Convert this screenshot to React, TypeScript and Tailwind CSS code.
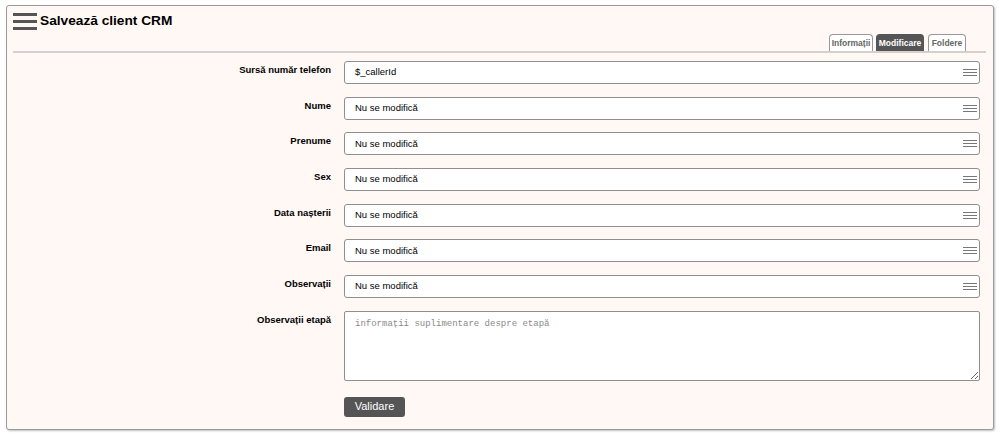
import React from "react";

const rows = [
  { label: "Sursă număr telefon", value: "$_callerId" },
  { label: "Nume", value: "Nu se modifică" },
  { label: "Prenume", value: "Nu se modifică" },
  { label: "Sex", value: "Nu se modifică" },
  { label: "Data nașterii", value: "Nu se modifică" },
  { label: "Email", value: "Nu se modifică" },
  { label: "Observații", value: "Nu se modifică" },
];

const MenuLines = () => (
  <div className="flex flex-col gap-[2px] w-[14px]">
    <div className="h-[1px] bg-[#777]" />
    <div className="h-[1px] bg-[#777]" />
    <div className="h-[1px] bg-[#777]" />
  </div>
);

const App = () => {
  return (
    <div
      className="w-[1000px] h-[435px] bg-white pt-[5px] px-[6px]"
      style={{ fontFamily: '"Liberation Sans", Arial, sans-serif' }}
    >
      <div className="h-[425px] border border-[#9a9a9a] rounded-[3px] bg-[#fff8f5] shadow-[1px_1px_2px_rgba(0,0,0,0.25)] px-[6px] pt-[6px]">
        {/* header */}
        <div className="flex items-center h-[18px]">
          <div className="flex flex-col gap-[4px] w-[24px] mr-[3px]">
            <div className="h-[3px] bg-[#555]" />
            <div className="h-[3px] bg-[#555]" />
            <div className="h-[3px] bg-[#555]" />
          </div>
          <h1 className="text-[13.7px] font-bold text-black">Salvează client CRM</h1>
        </div>

        {/* tabs */}
        <div className="flex justify-end items-end h-[23px] border-b-2 border-[#d4d0ce] mr-[1px] pr-[20px] gap-[3px]">
          <div className="w-[44px] h-[17px] border border-b-0 border-[#999] rounded-t-[4px] bg-white text-[8.5px] font-bold text-[#666] flex items-center justify-center">
            Informații
          </div>
          <div className="w-[48px] h-[17px] border border-b-0 border-[#555] rounded-t-[4px] bg-[#555] text-[8.5px] font-bold text-white flex items-center justify-center">
            Modificare
          </div>
          <div className="w-[38px] h-[17px] border border-b-0 border-[#999] rounded-t-[4px] bg-white text-[8.5px] font-bold text-[#666] flex items-center justify-center ml-[1px]">
            Foldere
          </div>
        </div>

        {/* form */}
        <div className="mt-[8px] flex flex-col gap-[12.67px]">
          {rows.map((r) => (
            <div key={r.label} className="flex">
              <div className="w-[318px] text-right text-[9.5px] leading-[12px] font-bold text-black pt-[3px]">
                {r.label}
              </div>
              <div className="ml-[13px] w-[636px] h-[23px] border border-[#8f8f8f] rounded-[3px] bg-white flex items-center justify-between pl-[10px] pr-[2px] text-[9.5px] text-black">
                <span>{r.value}</span>
                <MenuLines />
              </div>
            </div>
          ))}
          <div className="flex">
            <div className="w-[318px] text-right text-[9.5px] leading-[12px] font-bold text-black pt-[3px]">
              Observații etapă
            </div>
            <textarea
              className="ml-[13px] w-[636px] h-[70px] border border-[#8f8f8f] rounded-[2px] bg-white px-[10px] py-[6px] text-[9px] text-black placeholder:text-[#8a8a8a] outline-none"
              style={{ fontFamily: '"Liberation Mono", "Courier New", monospace' }}
              placeholder="informații suplimentare despre etapă"
            />
          </div>
        </div>

        <div className="flex mt-[16px]">
          <div className="w-[331px]" />
          <button className="w-[61px] h-[20px] bg-[#555] rounded-[3px] text-white text-[11px]">
            Validare
          </button>
        </div>
      </div>
    </div>
  );
};

export default App;
